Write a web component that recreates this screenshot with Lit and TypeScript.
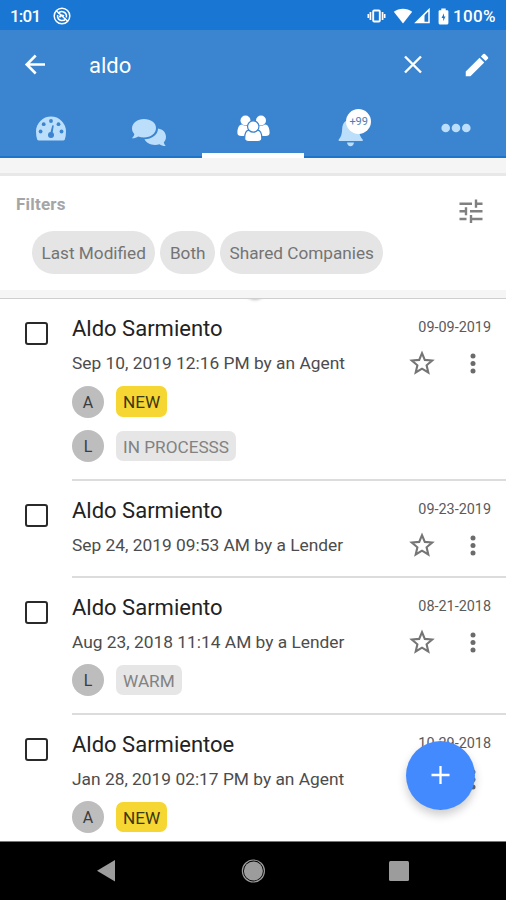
import { LitElement, html, css, svg, nothing } from "lit";
import { customElement, property } from "lit/decorators.js";

interface Tag {
  who: string;
  label: string;
  hot?: boolean;
}

interface Lead {
  name: string;
  date: string;
  activity: string;
  tags: Tag[];
}

const leads: Lead[] = [
  {
    name: "Aldo Sarmiento",
    date: "09-09-2019",
    activity: "Sep 10, 2019 12:16 PM by an Agent",
    tags: [
      { who: "A", label: "NEW", hot: true },
      { who: "L", label: "IN PROCESSS" },
    ],
  },
  {
    name: "Aldo Sarmiento",
    date: "09-23-2019",
    activity: "Sep 24, 2019 09:53 AM by a Lender",
    tags: [],
  },
  {
    name: "Aldo Sarmiento",
    date: "08-21-2018",
    activity: "Aug 23, 2018 11:14 AM by a Lender",
    tags: [{ who: "L", label: "WARM" }],
  },
  {
    name: "Aldo Sarmientoe",
    date: "10-29-2018",
    activity: "Jan 28, 2019 02:17 PM by an Agent",
    tags: [{ who: "A", label: "NEW", hot: true }],
  },
];

@customElement("status-bar")
export class StatusBar extends LitElement {
  static styles = css`
    :host {
      display: flex;
      align-items: center;
      height: 30px;
      padding: 2px 9px 0 10px;
      box-sizing: border-box;
      background: #1976d2;
      color: #fff;
      font: 500 17px/28px Roboto, sans-serif;
    }
    .clock { width: 43px; letter-spacing: -0.8px; }
    .spacer { flex: 1; }
    .vibrate { margin-right: 7px; }
    .signal { margin-left: 1px; margin-right: 8px; }
    .level { width: 44px; margin-left: 4px; letter-spacing: 0.3px; }
    svg { display: block; }
  `;

  render() {
    return html`
      <span class="clock">1:01</span>
      <svg width="18" height="18" viewBox="0 0 18 18" fill="none" stroke="#fff" stroke-width="1.500">
        <circle cx="9" cy="9" r="7.800" />
        <path d="M5.200 6.500A4.600 4.600 0 0 1 13.400 8v2.600M12.800 11.700A4.600 4.600 0 0 1 4.600 10V8" />
        <path d="M3 3.500L15 14.500" />
        <path d="M6.500 10.300q1.500-3 4.500-1.300" stroke-width="1.800" />
      </svg>
      <span class="spacer"></span>
      <svg class="vibrate" width="19" height="16" viewBox="0 0 19 16" fill="#fff">
        <path d="M0.500 6h1.600v4H0.500zM2.600 4h1.700v8H2.600zM14.700 4h1.700v8h-1.700zM16.900 6h1.600v4h-1.600z" />
        <rect x="6.200" y="2.500" width="6.600" height="11" rx="1" fill="none" stroke="#fff" stroke-width="1.900" />
      </svg>
      <svg width="20" height="16" viewBox="0 0 20 16" fill="#fff">
        <path d="M0.800 3.800C6-.3 14-.3 19.200 3.800L10 15.400z" />
      </svg>
      <svg class="signal" width="16" height="16" viewBox="0 0 16 16">
        <path d="M15 1.600V14.600H2z" fill="none" stroke="#fff" stroke-width="1.500" />
        <path d="M10.500 6v9H1.200z" fill="#fff" />
      </svg>
      <svg width="11" height="17" viewBox="0 0 11 17">
        <path d="M3.300.5h4.400v1.700h1.500q1.200 0 1.200 1.200v11.700q0 1.300-1.200 1.300H1.800Q.6 16.400.6 15.100V3.400Q.6 2.200 1.800 2.200h1.500z" fill="#fff" />
        <path d="M6 5.200L3.500 10h1.700v3.200L7.500 8.600H6z" fill="#1976d2" />
      </svg>
      <span class="level">100%</span>
    `;
  }
}

@customElement("search-bar")
export class SearchBar extends LitElement {
  static styles = css`
    :host {
      display: flex;
      align-items: center;
      height: 70px;
      padding: 0 14px 0 22px;
      box-sizing: border-box;
      color: #fff;
    }
    .query {
      flex: 1;
      margin-left: 41px;
      padding-top: 1px;
      font: 400 22px/30px Roboto, sans-serif;
    }
    .clear { margin-right: 37px; }
    svg { display: block; }
  `;

  render() {
    return html`
      <svg width="26" height="26" viewBox="0 0 26 26" fill="none" stroke="#fff" stroke-width="2.600">
        <path d="M23 12.500H5.500M13.700 3.500L4.700 12.500l9 9" />
      </svg>
      <span class="query">aldo</span>
      <svg class="clear" width="24" height="24" viewBox="0 0 24 24" stroke="#fff" stroke-width="2.400">
        <path d="M4 3.500l16 16M20 3.500L4 19.500" />
      </svg>
      <svg width="30" height="30" viewBox="0 0 24 24" fill="#fff">
        <path d="M3 17.250V21h3.750L17.810 9.940l-3.750-3.750L3 17.250zM20.710 7.040a1 1 0 0 0 0-1.410l-2.340-2.340a1 1 0 0 0-1.410 0l-1.830 1.830 3.750 3.750 1.830-1.830z" />
      </svg>
    `;
  }
}

const torso = (cx: number, top: number) => svg`
  <path d="M${cx - 8.6} ${top + 8}c0-5 1.800-8.400 4.600-8.400q4 2.600 8 0c2.800 0 4.600 3.400 4.600 8.400q0 3-4 3h-9.200q-4 0-4-3z" />`;

@customElement("tab-strip")
export class TabStrip extends LitElement {
  static styles = css`
    :host {
      display: grid;
      grid-template-columns: repeat(5, 1fr);
      height: 58px;
      box-sizing: border-box;
      border-bottom: 2px solid #1d74cb;
    }
    .tab {
      display: flex;
      align-items: center;
      justify-content: center;
      color: #bbdefb;
    }
    .active {
      color: #fff;
      box-shadow: inset 0 -3px #fff, 0 2px #fff;
      z-index: 1;
    }
    .gauge { padding-top: 2px; }
    .chat { padding: 9px 6px 0 0; }
    .bell { position: relative; display: block; margin: 2px 4px 0 0; }
    .count {
      position: absolute;
      left: 9px;
      top: 0;
      width: 25px;
      height: 25px;
      border-radius: 50%;
      background: #fff;
      color: #4a7fb5;
      font: 400 11px/26px Roboto, sans-serif;
      text-align: center;
    }
    svg { display: block; }
  `;

  render() {
    return html`
      <div class="tab gauge">
        <svg width="32" height="26" viewBox="0 0 32 26">
          <path d="M1 15.500a15 15 0 0 1 30 0q0 4.500-1.200 8-.4 1-1.700 1H3.900q-1.300 0-1.700-1Q1 20 1 15.500z" fill="currentColor" />
          <g fill="#3a84d0">
            <circle cx="5.600" cy="15.500" r="1.900" /><circle cx="8.700" cy="8.200" r="1.900" />
            <circle cx="16" cy="5" r="1.900" /><circle cx="23.500" cy="8.200" r="1.900" />
            <circle cx="26.500" cy="15.500" r="1.900" /><circle cx="16" cy="19" r="3" />
            <path d="M14.800 19L17.300 9.200l1.500.4L17.200 19z" />
          </g>
        </svg>
      </div>
      <div class="tab chat">
        <svg width="36" height="34" viewBox="0 -2 36 34" fill="currentColor">
          <path d="M27 10.500c5 .8 8 4 8 8.500 0 2.200-.9 4-2.200 5.300.2 1.500 1 2.700 2 3.700-2.500.1-4.700-.5-6.300-1.800-1.500.5-3 .7-4.500.7-5 0-9-2.300-10.500-5.600C20.500 21 27 17 27 10.500z" />
          <path d="M13 1C6.400 1 1 5 1 10.500c0 2 .9 4 2.300 5.400C3.200 17.500 2.300 19 .8 20.200c2.500.1 4.700-.5 6.400-1.800 1.700.7 3.700 1.100 5.800 1.100 6.700 0 12-4 12-9.500S19.700 1 13 1z" />
        </svg>
      </div>
      <div class="tab active">
        <svg width="34" height="30" viewBox="0 0 34 30" fill="currentColor">
          ${torso(10, 12)} ${torso(25, 12)}
          <circle cx="9.500" cy="7.500" r="5" /><circle cx="25" cy="7.500" r="5" />
          <g stroke="#3a84d0" stroke-width="1.200">
            ${torso(17.250, 17.500)}
            <circle cx="17.250" cy="13.500" r="5.700" />
          </g>
        </svg>
      </div>
      <div class="tab">
        <span class="bell">
          <svg width="30" height="40" viewBox="0 0 30 40" fill="currentColor">
            <path d="M13 10.500c-4.800.5-7.500 4-7.800 9-.3 5.500-1 8.500-3.500 11v1.500h24V30.500c-2.500-2.500-3.400-5.500-3.700-11-.3-5-4-8.500-9-9z" />
            <path d="M10 33.500h7q-.5 3.700-3.500 3.700T10 33.500z" />
          </svg>
          <span class="count">+99</span>
        </span>
      </div>
      <div class="tab">
        <svg width="32" height="10" viewBox="0 0 32 10" fill="currentColor">
          <circle cx="6.700" cy="5" r="4.300" /><circle cx="17" cy="5" r="4.300" /><circle cx="27.300" cy="5" r="4.300" />
        </svg>
      </div>
    `;
  }
}

@customElement("filter-panel")
export class FilterPanel extends LitElement {
  static styles = css`
    :host {
      display: block;
      background: #f5f5f5;
      padding: 15px 0 8px;
      border-bottom: 1px solid #cfcfcf;
      font-family: Roboto, sans-serif;
    }
    .panel {
      display: flex;
      justify-content: space-between;
      height: 117px;
      box-sizing: border-box;
      border-top: 3px solid #e8e8e8;
      background: #fff;
      padding: 17px 22px 0 16px;
    }
    .title {
      color: #a5a5a5;
      font: 700 17px/22px Roboto, sans-serif;
      letter-spacing: 0.2px;
    }
    .chips { display: flex; gap: 5px; margin: 16px 0 0 16px; }
    .chip {
      height: 43px;
      border-radius: 22px;
      background: #e5e5e5;
      color: #747474;
      font-size: 17.200px;
      line-height: 44px;
      white-space: nowrap;
      padding: 0 9.500px;
    }
    .tune { display: block; margin-top: 5px; }
  `;

  render() {
    return html`
      <div class="panel">
        <div>
          <div class="title">Filters</div>
          <div class="chips">
            ${["Last Modified", "Both", "Shared Companies"].map((c) => html`<span class="chip">${c}</span>`)}
          </div>
        </div>
        <svg class="tune" width="26" height="26" viewBox="0 0 26 26" stroke="#808080" stroke-width="2.400">
          <path d="M1.500 5.700H14M18 5.700H24.500M18 1.500V9.700M1.500 13.300H8M8 9.300V17.300M12 13.300H24.500M1.500 21H8.500M13 21H24.500M13 17V25" />
        </svg>
      </div>
    `;
  }
}

@customElement("lead-row")
export class LeadRow extends LitElement {
  @property({ attribute: false }) lead!: Lead;

  static styles = css`
    :host { display: flex; padding-left: 25px; font-family: Roboto, sans-serif; }
    .check {
      flex: none;
      width: 23px;
      height: 23px;
      box-sizing: border-box;
      margin: 23px 24px 0 0;
      border: 2px solid #2a2a2a;
      border-radius: 3px;
    }
    .body { flex: 1; border-bottom: 2px solid #dcdcdc; box-sizing: border-box; padding: 14px 15px 16.500px 0; }
    .line { display: flex; justify-content: space-between; align-items: center; white-space: nowrap; }
    .name { font-size: 22px; line-height: 31px; height: 30px; color: #222; }
    .date { font-size: 14.400px; line-height: 28px; color: #5a5a5a; }
    .second { height: 30px; margin-top: 5px; }
    .activity { font-size: 17.350px; line-height: 31px; height: 30px; color: #4c4c4c; }
    .actions { display: flex; align-items: center; gap: 35px; padding-right: 15px; }
    .tags { display: grid; gap: 12.500px; padding-top: 7.500px; }
    .tag { display: flex; align-items: center; gap: 12px; height: 32px; }
    .who {
      width: 32px;
      height: 32px;
      border-radius: 50%;
      background: #bdbdbd;
      color: #3c3c3c;
      font-size: 16px;
      line-height: 33px;
      text-align: center;
    }
    .label {
      height: 30.500px;
      border-radius: 7px;
      background: #e6e6e6;
      color: #828282;
      font-size: 17.200px;
      line-height: 33px;
      padding: 0 7px;
    }
    .hot { background: #f5d632; color: #3d3612; }
    .plain { padding-bottom: 16px; }
    svg { display: block; }
  `;

  render() {
    const { name, date, activity, tags } = this.lead;
    return html`
      <span class="check"></span>
      <div class="body ${tags.length ? "" : "plain"}">
        <div class="line"><span class="name">${name}</span><span class="date">${date}</span></div>
        <div class="line second">
          <span class="activity">${activity}</span>
          <span class="actions">
            <svg width="26" height="26" viewBox="0 0 26 26" fill="none" stroke="#757575" stroke-width="2.100">
              <path d="M13 3.200L15.800 9.900 23.200 10.500 17.600 15.300 19.300 22.500 13 18.700 6.700 22.500 8.400 15.300 2.800 10.500 10.200 9.900z" />
            </svg>
            <svg width="6" height="22" viewBox="0 0 6 22" fill="#6b6b6b">
              <circle cx="3" cy="4" r="2.500" /><circle cx="3" cy="11.500" r="2.500" /><circle cx="3" cy="19" r="2.500" />
            </svg>
          </span>
        </div>
        ${tags.length
          ? html`<div class="tags">
              ${tags.map(
                (t) => html`<div class="tag">
                  <span class="who">${t.who}</span>
                  <span class="label ${t.hot ? "hot" : ""}">${t.label}</span>
                </div>`
              )}
            </div>`
          : nothing}
      </div>
    `;
  }
}

@customElement("app-root")
export class AppRoot extends LitElement {
  static styles = css`
    :host {
      display: flex;
      flex-direction: column;
      position: relative;
      width: 506px;
      height: 900px;
      overflow: hidden;
      background: #fff;
    }
    .header { background: #3a84d0; }
    .list { position: relative; flex: 1; min-height: 0; overflow: hidden; }
    .pull {
      position: absolute;
      left: 243px;
      top: -25px;
      width: 24px;
      height: 25px;
      border-radius: 50%;
      box-shadow: 0 1px 3px rgba(0, 0, 0, 0.25);
    }
    .add {
      position: absolute;
      left: 406px;
      top: 740.500px;
      width: 69px;
      height: 69px;
      border-radius: 50%;
      background: #448aff;
      box-shadow: 0 5px 10px rgba(0, 0, 0, 0.2);
      display: flex;
      align-items: center;
      justify-content: center;
    }
    .nav {
      flex: none;
      display: grid;
      grid-template-columns: repeat(3, 146px);
      justify-content: center;
      justify-items: center;
      align-items: center;
      height: 59px;
      box-sizing: border-box;
      border-top: 1px solid #777;
      background: #000;
    }
    svg { display: block; }
  `;

  render() {
    return html`
      <status-bar></status-bar>
      <div class="header">
        <search-bar></search-bar>
        <tab-strip></tab-strip>
      </div>
      <filter-panel></filter-panel>
      <div class="list">
        <span class="pull"></span>
        ${leads.map((l) => html`<lead-row .lead=${l}></lead-row>`)}
      </div>
      <div class="nav">
        <svg width="22" height="24" viewBox="0 0 22 24"><path d="M19 1v21.500L1 11.700z" fill="#9c9c9c" /></svg>
        <svg width="24" height="24" viewBox="0 0 24 24">
          <circle cx="12.400" cy="12" r="11" fill="none" stroke="#9c9c9c" stroke-width="1.200" />
          <circle cx="12.400" cy="12" r="9.500" fill="#9c9c9c" />
        </svg>
        <svg width="20" height="20" viewBox="0 0 20 20"><rect width="20" height="20" rx="1.500" fill="#9c9c9c" /></svg>
      </div>
      <div class="add">
        <svg width="20" height="20" viewBox="0 0 20 20" stroke="#fff" stroke-width="2.300"><path d="M9.500 1v18M.5 10h18" /></svg>
      </div>
    `;
  }
}
